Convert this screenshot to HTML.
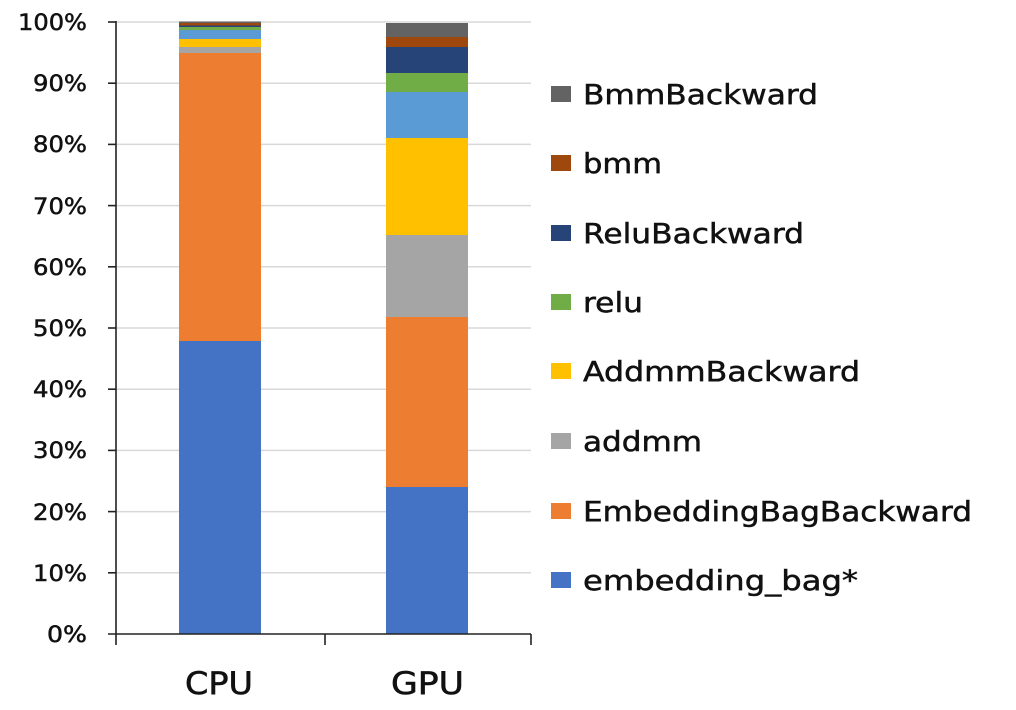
<!DOCTYPE html>
<html><head><meta charset="utf-8"><style>
html,body{margin:0;padding:0;background:#fff;width:1016px;height:710px;overflow:hidden}
</style></head><body>
<svg width="1016" height="710" viewBox="0 0 1016 710" xmlns="http://www.w3.org/2000/svg" font-family="DejaVu Sans, Liberation Sans, sans-serif">
<g stroke="#d9d9d9" stroke-width="1.5">
<line x1="116" y1="22" x2="531" y2="22"/><line x1="116" y1="83.2" x2="531" y2="83.2"/>
<line x1="116" y1="144.4" x2="531" y2="144.4"/><line x1="116" y1="205.6" x2="531" y2="205.6"/>
<line x1="116" y1="266.8" x2="531" y2="266.8"/><line x1="116" y1="328" x2="531" y2="328"/>
<line x1="116" y1="389.2" x2="531" y2="389.2"/><line x1="116" y1="450.4" x2="531" y2="450.4"/>
<line x1="116" y1="511.6" x2="531" y2="511.6"/><line x1="116" y1="572.8" x2="531" y2="572.8"/>
</g>
<rect x="179" y="341" width="82" height="293" fill="#4472c4"/>
<rect x="179" y="53" width="82" height="288" fill="#ed7d31"/>
<rect x="179" y="47" width="82" height="6" fill="#a5a5a5"/>
<rect x="179" y="39" width="82" height="8" fill="#ffc000"/>
<rect x="179" y="30" width="82" height="9" fill="#5b9bd5"/>
<rect x="179" y="27" width="82" height="3" fill="#70ad47"/>
<rect x="179" y="25.5" width="82" height="1.5" fill="#264478"/>
<rect x="179" y="23" width="82" height="2.5" fill="#9e480e"/>
<rect x="179" y="21.5" width="82" height="1.5" fill="#636363"/>
<rect x="386" y="487" width="82" height="147" fill="#4472c4"/>
<rect x="386" y="317" width="82" height="170" fill="#ed7d31"/>
<rect x="386" y="235" width="82" height="82" fill="#a5a5a5"/>
<rect x="386" y="138" width="82" height="97" fill="#ffc000"/>
<rect x="386" y="92" width="82" height="46" fill="#5b9bd5"/>
<rect x="386" y="73" width="82" height="19" fill="#70ad47"/>
<rect x="386" y="47" width="82" height="26" fill="#264478"/>
<rect x="386" y="37" width="82" height="10" fill="#9e480e"/>
<rect x="386" y="23" width="82" height="14" fill="#636363"/>
<g stroke="#222" stroke-width="1.6">
<line x1="116" y1="21" x2="116" y2="645"/>
<line x1="108" y1="634" x2="531" y2="634"/>
<line x1="325" y1="634" x2="325" y2="645"/><line x1="531" y1="634" x2="531" y2="645"/>
<line x1="108" y1="22" x2="116" y2="22"/><line x1="108" y1="83.2" x2="116" y2="83.2"/>
<line x1="108" y1="144.4" x2="116" y2="144.4"/><line x1="108" y1="205.6" x2="116" y2="205.6"/>
<line x1="108" y1="266.8" x2="116" y2="266.8"/><line x1="108" y1="328" x2="116" y2="328"/>
<line x1="108" y1="389.2" x2="116" y2="389.2"/><line x1="108" y1="450.4" x2="116" y2="450.4"/>
<line x1="108" y1="511.6" x2="116" y2="511.6"/><line x1="108" y1="572.8" x2="116" y2="572.8"/>
</g>
<g font-size="22" text-anchor="end" fill="#111" stroke="#111" stroke-width="0.5">
<text x="87" y="30" textLength="69" lengthAdjust="spacingAndGlyphs">100%</text>
<text x="87" y="91" textLength="54" lengthAdjust="spacingAndGlyphs">90%</text>
<text x="87" y="152" textLength="54" lengthAdjust="spacingAndGlyphs">80%</text>
<text x="87" y="214" textLength="54" lengthAdjust="spacingAndGlyphs">70%</text>
<text x="87" y="275" textLength="54" lengthAdjust="spacingAndGlyphs">60%</text>
<text x="87" y="336" textLength="54" lengthAdjust="spacingAndGlyphs">50%</text>
<text x="87" y="397" textLength="54" lengthAdjust="spacingAndGlyphs">40%</text>
<text x="87" y="458" textLength="54" lengthAdjust="spacingAndGlyphs">30%</text>
<text x="87" y="520" textLength="54" lengthAdjust="spacingAndGlyphs">20%</text>
<text x="87" y="581" textLength="54" lengthAdjust="spacingAndGlyphs">10%</text>
<text x="87" y="642" textLength="40" lengthAdjust="spacingAndGlyphs">0%</text>
</g>
<g font-size="31" fill="#111" stroke="#111" stroke-width="0.6">
<text x="185" y="694" textLength="68" lengthAdjust="spacingAndGlyphs">CPU</text>
<text x="391" y="694" textLength="73" lengthAdjust="spacingAndGlyphs">GPU</text>
</g>
<g font-size="28" fill="#111" stroke="#111" stroke-width="0.5">
<rect x="551" y="86" width="20" height="16" fill="#636363" stroke="none"/><text x="583" y="104" textLength="235" lengthAdjust="spacingAndGlyphs">BmmBackward</text>
<rect x="551" y="155" width="20" height="16" fill="#9e480e" stroke="none"/><text x="583" y="173" textLength="79" lengthAdjust="spacingAndGlyphs">bmm</text>
<rect x="551" y="225" width="20" height="16" fill="#264478" stroke="none"/><text x="583" y="243" textLength="221" lengthAdjust="spacingAndGlyphs">ReluBackward</text>
<rect x="551" y="294" width="20" height="16" fill="#70ad47" stroke="none"/><text x="583" y="312" textLength="60" lengthAdjust="spacingAndGlyphs">relu</text>
<rect x="551" y="363" width="20" height="16" fill="#ffc000" stroke="none"/><text x="583" y="381" textLength="277" lengthAdjust="spacingAndGlyphs">AddmmBackward</text>
<rect x="551" y="433" width="20" height="16" fill="#a5a5a5" stroke="none"/><text x="583" y="451" textLength="119" lengthAdjust="spacingAndGlyphs">addmm</text>
<rect x="551" y="503" width="20" height="16" fill="#ed7d31" stroke="none"/><text x="583" y="521" textLength="389" lengthAdjust="spacingAndGlyphs">EmbeddingBagBackward</text>
<rect x="551" y="572" width="20" height="16" fill="#4472c4" stroke="none"/><text x="583" y="590" textLength="275" lengthAdjust="spacingAndGlyphs">embedding_bag*</text>
</g>
</svg>
</body></html>
